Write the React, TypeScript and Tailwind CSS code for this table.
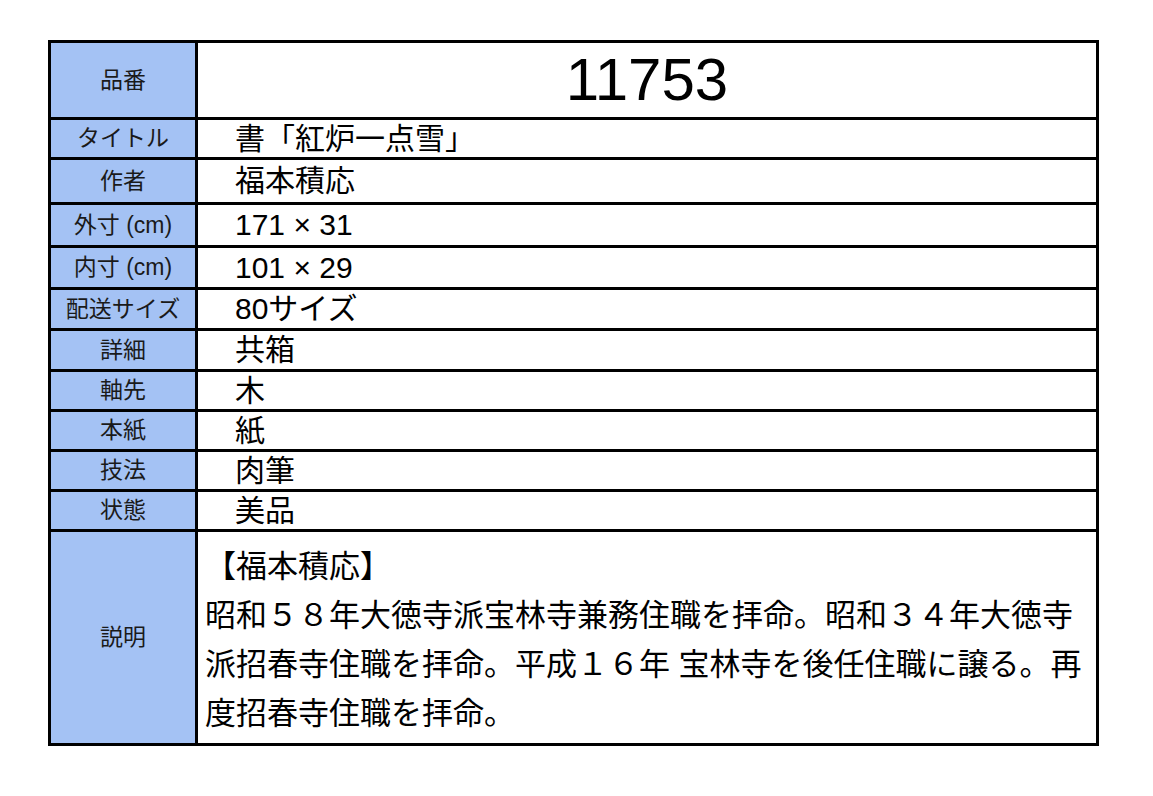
import React from "react";

const rows: { k: string; v: string; h: string }[] = [
  { k: "タイトル", v: "書「紅炉一点雪」", h: "h-[40px]" },
  { k: "作者", v: "福本積応", h: "h-[45px]" },
  { k: "外寸 (cm)", v: "171 × 31", h: "h-[43px]" },
  { k: "内寸 (cm)", v: "101 × 29", h: "h-[42px]" },
  { k: "配送サイズ", v: "80サイズ", h: "h-[41px]" },
  { k: "詳細", v: "共箱", h: "h-[41px]" },
  { k: "軸先", v: "木", h: "h-[40px]" },
  { k: "本紙", v: "紙", h: "h-[40px]" },
  { k: "技法", v: "肉筆", h: "h-[40px]" },
  { k: "状態", v: "美品", h: "h-[40px]" },
];

function Label({ children }: { children: React.ReactNode }) {
  return (
    <div className="w-[147px] shrink-0 border-r-[3px] border-black bg-[#a4c2f4] flex items-center justify-center text-[23px] leading-none text-[#1a1a1a] whitespace-nowrap">
      {children}
    </div>
  );
}

export default function App() {
  return (
    <div className="min-h-screen bg-white pt-[40px] pl-[48px] font-['Liberation_Sans','Noto_Sans_CJK_JP',sans-serif] text-black">
      <div className="w-[1051px] border-[3px] border-black flex flex-col">
        <div className="flex h-[77px] border-b-[3px] border-black">
          <Label>品番</Label>
          <div className="flex-1 flex items-center justify-center text-[60px] leading-none">
            11753
          </div>
        </div>
        {rows.map(({ k, v, h }) => (
          <div key={k} className={`flex ${h} border-b-[3px] border-black`}>
            <Label>{k}</Label>
            <div className="flex-1 flex items-center pl-[37px] text-[30px] leading-none whitespace-nowrap">
              {v}
            </div>
          </div>
        ))}
        <div className="flex h-[211px]">
          <Label>説明</Label>
          <div className="flex-1 pl-[7px] pt-[10px] text-[31px] leading-[49px] whitespace-nowrap">
            <div>【福本積応】</div>
            <div>昭和５８年大徳寺派宝林寺兼務住職を拝命。昭和３４年大徳寺</div>
            <div>派招春寺住職を拝命。平成１６年 宝林寺を後任住職に譲る。再</div>
            <div>度招春寺住職を拝命。</div>
          </div>
        </div>
      </div>
    </div>
  );
}
